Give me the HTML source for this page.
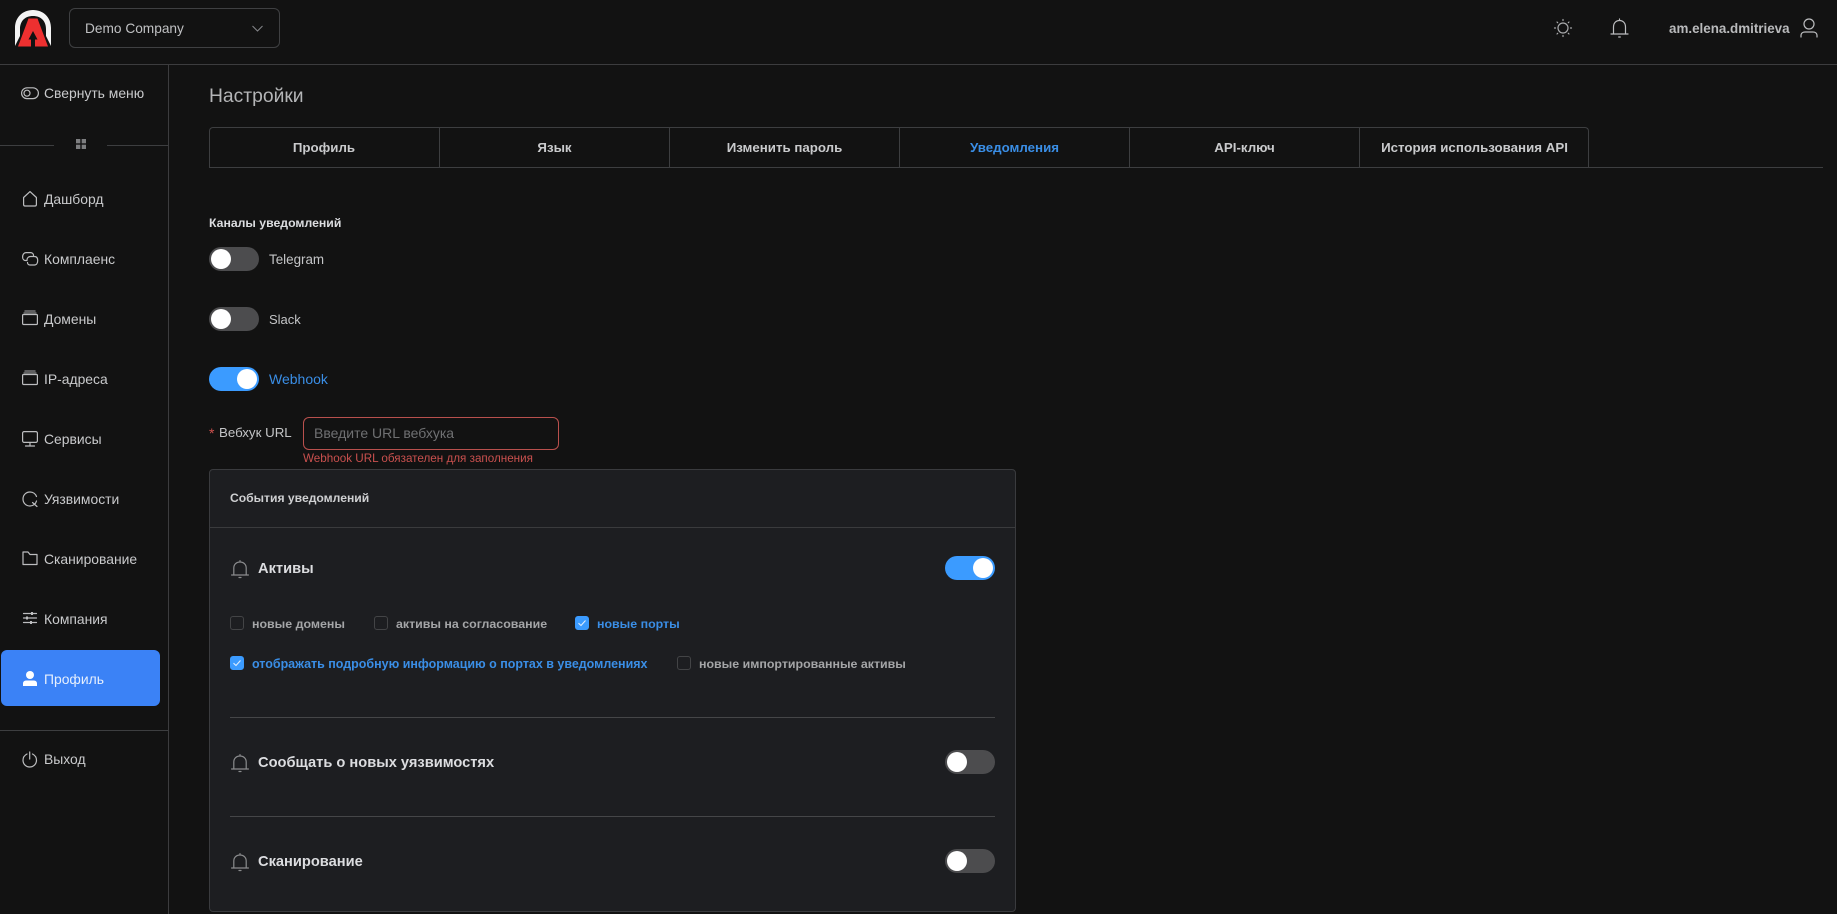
<!DOCTYPE html>
<html><head><meta charset="utf-8"><style>
*{box-sizing:border-box}
html,body{margin:0;padding:0;width:1837px;height:914px;overflow:hidden;background:#121212;font-family:"Liberation Sans","Noto Sans CJK SC",sans-serif;color:#d0d1d3}
.a{position:absolute}
.t{position:absolute;white-space:nowrap;line-height:20px;height:20px}
.n{font-size:13.900px;left:44px;color:#c9cacc}
.tab{position:absolute;top:127px;height:41px;line-height:41px;text-align:center;font-size:13.300px;font-weight:700;color:#c9cacc;border-right:1px solid #3d3e40}
.sw{position:absolute;width:50px;height:24px;border-radius:12px;background:#4c4c4e}
.sw:after{content:"";position:absolute;left:2px;top:2px;width:20px;height:20px;border-radius:50%;background:#fff}
.sw.on{background:#3b9bff}
.sw.on:after{left:28px}
.cb{position:absolute;width:14px;height:14px;border-radius:3px;border:1px solid #434446}
.cb.on{background:#3b9bff;border-color:#3b9bff}
.cl{position:absolute;white-space:nowrap;font-size:12.400px;font-weight:700;line-height:20px;height:20px;color:#a4a5a7}
.cl.blue{color:#3a8ee6}
.blue{color:#3a8ee6}
.h{position:absolute;height:1px;background:#3d3e40}
.v{position:absolute;width:1px;background:#3d3e40}
svg{position:absolute;overflow:visible}
.i{fill:none;stroke:#bcbdbf;stroke-width:1.2;stroke-linecap:round;stroke-linejoin:round}
.b{fill:none;stroke:#8b8c8e;stroke-width:1.2;stroke-linecap:round;stroke-linejoin:round}
.ct{position:absolute;white-space:nowrap;font-size:14.650px;font-weight:700;line-height:20px;height:20px;left:258px;color:#dcdde0}
</style></head><body>

<!-- Top bar -->
<svg class="a" style="left:0;top:0" width="60" height="60">
<path d="M15 46V28C15 17 23 10 33 10C43 10 51 17 51 28V46L46 36V29C46 21 41 16 33 16C25 16 20 21 20 29V36Z" fill="#f4f4f4"/>
<path d="M28.500 18.500H37.500L48 46.500H35V39.500H37.500L33 31L28.500 39.500H31V46.500H18Z" fill="#ee3030" stroke="#121212" stroke-width="1.500" paint-order="stroke"/>
</svg>
<div class="a" style="left:69px;top:8px;width:211px;height:40px;border:1px solid #3f4042;border-radius:6px"></div>
<div class="t" style="left:85px;top:19px;font-size:13.700px;color:#c0c1c3">Demo Company</div>
<svg style="left:251px;top:24px" width="14" height="10"><path d="M1.500 2L6.500 7L11.500 2" fill="none" stroke="#85868a" stroke-width="1"/></svg>

<svg style="left:1553px;top:18px" width="20" height="20"><g class="i" style="stroke:#a9aaac">
<circle cx="10" cy="10" r="5"/><path d="M10 1.500V2.500M10 17.500V18.500M1.500 10H2.500M17.500 10H18.500M4 4L4.700 4.700M15.300 15.300L16 16M16 4L15.300 4.700M4.700 15.300L4 16"/></g></svg>
<svg style="left:1610px;top:18px" width="20" height="20"><g class="i">
<path d="M1 16H18M3.500 16V9C3.500 5 6 2.500 9.500 2.500C13 2.500 15.500 5 15.500 9V16M8.700 19H10.300M9.500 1V2.500"/></g></svg>
<div class="t" style="left:1669px;top:19px;font-size:13.400px;font-weight:700;color:#b9babc">am.elena.dmitrieva</div>
<svg style="left:1800px;top:18px" width="18" height="20"><g class="i">
<circle cx="9" cy="6" r="5"/><path d="M1 19V17.500C1 15 3 14 5 14H13C15 14 17 15 17 17.500V19"/></g></svg>

<div class="h" style="left:0;top:64px;width:1837px;background:#3c3c3e"></div>
<div class="v" style="left:168px;top:65px;height:849px;background:#3c3c3e"></div>

<!-- Sidebar -->
<svg style="left:21px;top:87px" width="18" height="13"><g class="i"><rect x=".6" y=".8" width="16.800" height="10.800" rx="5.400"/><circle cx="6" cy="6.200" r="3"/></g></svg>
<div class="t n" style="top:83px">Свернуть меню</div>

<div class="h" style="left:0;top:145px;width:54px"></div>
<div class="h" style="left:107px;top:145px;width:61px"></div>
<svg style="left:76px;top:139px" width="10" height="10"><g fill="#7d7e80"><rect width="4.300" height="4.300"/><rect x="5.700" width="4.300" height="4.300"/><rect y="5.700" width="4.300" height="4.300"/><rect x="5.700" y="5.700" width="4.300" height="4.300"/></g></svg>

<svg style="left:23px;top:191px" width="15" height="16"><path class="i" d="M.6 6.500L7 .6L13.400 6.500V13.500C13.400 14.500 13 15 12 15H2C1 15 .6 14.500 .6 13.500Z"/></svg>
<div class="t n" style="top:189px">Дашборд</div>

<svg style="left:22px;top:252px" width="17" height="14"><g class="i"><path d="M5 8.500H3.500C2 8.500 .6 7.300 .6 5C.6 2.500 2 .6 4 .6H8.500C10.500 .6 11.500 2 11.500 3.500"/><path d="M5 8C5 6 6.500 4.500 8.500 4.500H12.500C14.500 4.500 15.700 6 15.700 8.500C15.700 11 14.500 13 12.500 13H8C6.500 13 5.500 12 5.500 10.500"/></g></svg>
<div class="t n" style="top:249px">Комплаенс</div>

<svg style="left:22px;top:310px" width="16" height="15"><g class="i"><rect x=".6" y="4.500" width="14.800" height="10" rx="1"/><path d="M2 3H14" style="stroke:#8a8b8d"/><path d="M3 1H13" style="stroke:#77787a;stroke-width:1.500"/></g></svg>
<div class="t n" style="top:309px">Домены</div>

<svg style="left:22px;top:370px" width="16" height="15"><g class="i"><rect x=".6" y="4.500" width="14.800" height="10" rx="1"/><path d="M2 3H14" style="stroke:#8a8b8d"/><path d="M3 1H13" style="stroke:#77787a;stroke-width:1.500"/></g></svg>
<div class="t n" style="top:369px">IP-адреса</div>

<svg style="left:22px;top:431px" width="16" height="16"><g class="i"><rect x=".6" y=".6" width="14.800" height="10.800" rx="1.500"/><path d="M8 11.500V14.500M3.500 15H12.500"/></g></svg>
<div class="t n" style="top:429px">Сервисы</div>

<svg style="left:22px;top:491px" width="16" height="16"><g class="i"><path d="M14.500 10C13.800 12.800 11.200 15 8 15C4 15 1 12 1 8C1 4 4 1 8 1C11 1 13.500 2.800 14.500 5.500"/><path d="M10.500 11.500L15 15.500"/></g></svg>
<div class="t n" style="top:489px">Уязвимости</div>

<svg style="left:22px;top:551px" width="16" height="15"><path class="i" d="M1 13.500V1H6L8 3.500H15V13.500Z"/></svg>
<div class="t n" style="top:549px">Сканирование</div>

<svg style="left:23px;top:611px" width="14" height="15"><g class="i"><path d="M0.500 2.500H13.500M0.500 7H13.500M0.500 11.500H13.500"/></g><g fill="#bcbdbf"><rect x="8" y="1" width="2" height="3"/><rect x="3" y="5.500" width="2" height="3"/><rect x="7" y="10" width="2" height="3"/></g></svg>
<div class="t n" style="top:609px">Компания</div>

<div class="a" style="left:1px;top:650px;width:159px;height:56px;background:#3b82f6;border-radius:6px"></div>
<svg style="left:23px;top:671px" width="14" height="15"><circle cx="7" cy="4" r="4" fill="#fff"/><path d="M0 15V12.500C0 10.500 1.500 9.500 3.500 9.500H10.500C12.500 9.500 14 10.500 14 12.500V15Z" fill="#fff"/></svg>
<div class="t n" style="top:669px;color:#e6effd">Профиль</div>

<div class="h" style="left:0;top:730px;width:168px"></div>

<svg style="left:22px;top:751px" width="16" height="17"><g class="i"><path d="M5 3C2.600 4.200 1 6.600 1 9.300C1 13 4 16 7.700 16C11.400 16 14.500 13 14.500 9.300C14.500 6.600 12.900 4.200 10.500 3"/><path d="M7.700 1V8"/></g></svg>
<div class="t n" style="top:749px">Выход</div>

<!-- Main -->
<div class="t" style="left:209px;top:87px;font-size:19.300px;color:#b4b5b7">Настройки</div>

<div class="a" style="left:209px;top:127px;width:1380px;height:41px;border:1px solid #3d3e40;border-bottom:0;border-radius:4px 4px 0 0"></div>
<div class="tab" style="left:209px;width:231px">Профиль</div>
<div class="tab" style="left:440px;width:230px">Язык</div>
<div class="tab" style="left:670px;width:230px">Изменить пароль</div>
<div class="tab" style="left:900px;width:230px;color:#3a8ee6">Уведомления</div>
<div class="tab" style="left:1130px;width:230px">API-ключ</div>
<div class="tab" style="left:1360px;width:229px;border-right:0">История использования API</div>
<div class="h" style="left:209px;top:167px;width:1614px"></div>

<div class="t" style="left:209px;top:213px;font-size:12.250px;font-weight:700;color:#dcdde0">Каналы уведомлений</div>

<div class="sw" style="left:209px;top:247px"></div>
<div class="t" style="left:269px;top:250px;font-size:13.400px;color:#c4c5c7">Telegram</div>
<div class="sw" style="left:209px;top:307px"></div>
<div class="t" style="left:269px;top:310px;font-size:13px;color:#c4c5c7">Slack</div>
<div class="sw on" style="left:209px;top:367px"></div>
<div class="t blue" style="left:269px;top:369px;font-size:14px">Webhook</div>

<div class="t" style="left:209px;top:423px;font-size:14px;color:#d0514e">*</div>
<div class="t" style="left:219px;top:423px;font-size:13.300px;color:#c4c5c7">Вебхук URL</div>
<div class="a" style="left:303px;top:417px;width:256px;height:33px;border:1px solid #b9504d;border-radius:6px"></div>
<div class="t" style="left:314px;top:423px;font-size:14px;color:#6f7072">Введите URL вебхука</div>
<div class="t" style="left:303px;top:449px;font-size:11.660px;color:#c9504e">Webhook URL обязателен для заполнения</div>

<!-- Card -->
<div class="a" style="left:209px;top:469px;width:807px;height:443px;background:#1d1e21;border:1px solid #3a3b3e;border-radius:4px"></div>
<div class="t" style="left:230px;top:488px;font-size:12.150px;font-weight:700;color:#cfd0d2">События уведомлений</div>
<div class="h" style="left:210px;top:527px;width:805px;background:#3a3b3d"></div>

<svg style="left:231px;top:560px" width="18" height="18"><path class="b" d="M.6 15H17.400M2.800 15V8C2.800 4.500 5.400 2 9 2C12.600 2 15.200 4.500 15.200 8V15M8 17.500H10M9 .6V2"/></svg>
<div class="ct" style="top:559px">Активы</div>
<div class="sw on" style="left:945px;top:556px"></div>

<div class="cb" style="left:230px;top:616px"></div>
<div class="cl" style="left:252px;top:614px">новые домены</div>
<div class="cb" style="left:374px;top:616px"></div>
<div class="cl" style="left:396px;top:614px">активы на согласование</div>
<div class="cb on" style="left:575px;top:616px"></div>
<svg style="left:575px;top:616px" width="14" height="14"><path d="M3.500 7.200L6 9.500L10.500 4.500" fill="none" stroke="#dcecff" stroke-width="1.100"/></svg>
<div class="cl blue" style="left:597px;top:614px">новые порты</div>

<div class="cb on" style="left:230px;top:656px"></div>
<svg style="left:230px;top:656px" width="14" height="14"><path d="M3.500 7.200L6 9.500L10.500 4.500" fill="none" stroke="#dcecff" stroke-width="1.100"/></svg>
<div class="cl blue" style="left:252px;top:654px;font-size:12.470px">отображать подробную информацию о портах в уведомлениях</div>
<div class="cb" style="left:677px;top:656px"></div>
<div class="cl" style="left:699px;top:654px">новые импортированные активы</div>

<div class="h" style="left:230px;top:717px;width:765px;background:#454648"></div>

<svg style="left:231px;top:754px" width="18" height="18"><path class="b" d="M.6 15H17.400M2.800 15V8C2.800 4.500 5.400 2 9 2C12.600 2 15.200 4.500 15.200 8V15M8 17.500H10M9 .6V2"/></svg>
<div class="ct" style="top:753px">Сообщать о новых уязвимостях</div>
<div class="sw" style="left:945px;top:750px"></div>

<div class="h" style="left:230px;top:816px;width:765px;background:#454648"></div>

<svg style="left:231px;top:853px" width="18" height="18"><path class="b" d="M.6 15H17.400M2.800 15V8C2.800 4.500 5.400 2 9 2C12.600 2 15.200 4.500 15.200 8V15M8 17.500H10M9 .6V2"/></svg>
<div class="ct" style="top:852px">Сканирование</div>
<div class="sw" style="left:945px;top:849px"></div>

</body></html>
